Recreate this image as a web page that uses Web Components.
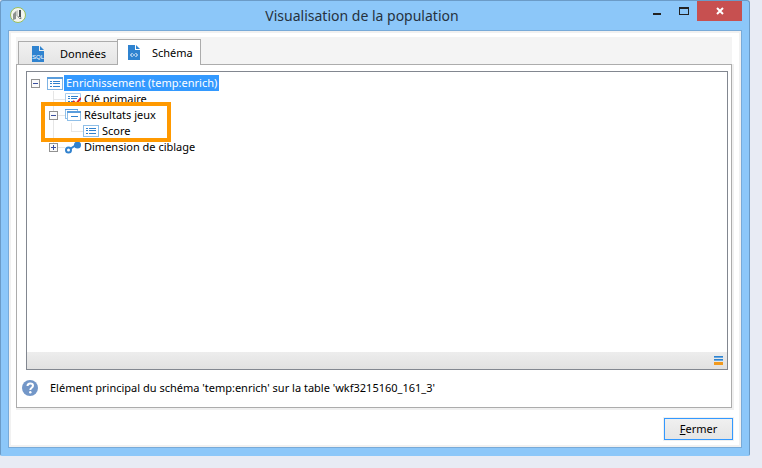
<!DOCTYPE html>
<html lang="fr">
<head>
<meta charset="utf-8">
<title>Visualisation de la population</title>
<style>
  body {
    margin: 0;
    background: #e8ebf4;
    color: #000;
    font: 11px/16px "Noto Sans", "Open Sans", sans-serif;
  }
</style>
</head>
<body>
<app-window heading="Visualisation de la population">
  <tab-strip>
    <tab-button icon="sql">Données</tab-button>
    <tab-button icon="schema" active>Schéma</tab-button>
  </tab-strip>
  <tab-panel>
    <schema-tree>
      <tree-node icon="list" label="Enrichissement (temp:enrich)" state="open" selected>
        <tree-node icon="key" label="Clé primaire"></tree-node>
        <tree-node icon="collection" label="Résultats jeux" state="open" highlight>
          <tree-node icon="list" label="Score"></tree-node>
        </tree-node>
        <tree-node icon="link" label="Dimension de ciblage" state="closed"></tree-node>
      </tree-node>
    </schema-tree>
    <help-line slot="footer">Elément principal du schéma 'temp:enrich' sur la table 'wkf3215160_161_3'</help-line>
  </tab-panel>
  <push-button slot="actions"><u>F</u>ermer</push-button>
</app-window>

<script>
const ICONS = {
  list: `<svg width="16" height="16" viewBox="0 0 16 16" shape-rendering="crispEdges">
    <rect x="0.5" y="2.5" width="15" height="12" fill="#fff" stroke="#7fb4e4"/>
    <path d="M0 2h16v2H0z" fill="#5a9ddc"/>
    <path d="M3 6h2v1H3zM3 8h2v1H3zM3 11h2v1H3zM6 6h7v1H6zM6 8h7v1H6zM6 11h7v1H6z" fill="#3182ce"/></svg>`,
  row: `<svg width="16" height="16" viewBox="0 0 16 16" shape-rendering="crispEdges">
    <rect x="0.5" y="2.5" width="15" height="11" fill="#fff" stroke="#8fbfe8"/>
    <path d="M3 5h2v1H3zM3 7h2v1H3zM3 10h2v1H3zM6 5h7v1H6zM6 7h7v1H6zM6 10h7v1H6z" fill="#3182ce"/></svg>`,
  key: `<svg width="16" height="16" viewBox="0 0 16 16">
    <path d="M.5 2.500h15v11H.5z" fill="#fff" stroke="#a9cdee"/>
    <path d="M3 5h2v1H3zM3 7h2v1H3zM3 10h2v1H3zM6 5h7v1H6zM6 7h6v1H6zM6 10h3v1H6z" fill="#3182ce"/>
    <path d="M8 10l3 3 5-6" fill="none" stroke="#d8232f" stroke-width="2"/></svg>`,
  collection: `<svg width="16" height="16" viewBox="0 0 16 16" shape-rendering="crispEdges">
    <path d="M.5 11.500V2.500h12V5M.5 11.500H3" fill="#fff" stroke="#8fbfe8"/>
    <path d="M0 2h13v1H0z" fill="#5a9ddc"/>
    <rect x="2.500" y="4.500" width="13" height="9" fill="#fff" stroke="#8fbfe8"/>
    <path d="M2 4h14v2H2z" fill="#5a9ddc"/><path d="M6 9h7v1H6z" fill="#3182ce"/></svg>`,
  link: `<svg width="16" height="16" viewBox="0 0 16 16">
    <path d="M5 10l6-4" stroke="#3182ce" stroke-width="2"/>
    <circle cx="3.500" cy="11" r="2.500" fill="#fff" stroke="#3182ce" stroke-width="2"/>
    <circle cx="12.500" cy="6" r="3.500" fill="#3182ce"/></svg>`,
  sql: `<svg width="12" height="16" viewBox="0 0 12 16">
    <path d="M0 0h7v5h5v11H0z" fill="#2f83d0"/><path d="M8 0l4 4H8z" fill="#2f83d0"/>
    <text x="6" y="13" text-anchor="middle" font-family="Liberation Sans, sans-serif" font-size="6" fill="#fff">SQL</text></svg>`,
  schema: `<svg width="12" height="15" viewBox="0 0 12 15">
    <path d="M0 0h7v5h5v10H0z" fill="#2f83d0"/><path d="M8 0l4 4H8z" fill="#2f83d0"/>
    <path d="M4.500 8l-2 2 2 2M7.500 8l2 2-2 2M5 10h2" fill="none" stroke="#fff"/></svg>`
};

class AppWindow extends HTMLElement {
  connectedCallback() {
    this.attachShadow({ mode: 'open' });
    this.shadowRoot.innerHTML = `
      <style>
        :host {
          display: flex;
          flex-direction: column;
          box-sizing: border-box;
          min-height: calc(100vh - 12px);
          margin: 0 12px 12px 0;
          padding: 0 7px 7px;
          background: #8cc7f9;
          border: 1px solid #6b9bc7;
          border-bottom-color: #8cc7f9;
          border-radius: 3px 3px 2px 2px;
        }
        header {
          display: grid;
          grid-template-columns: 1fr auto 1fr;
          height: 29px;
        }
        .app { margin: 5px 0 0 1px; }
        svg { display: block; }
        h1 {
          margin: 0;
          padding-right: 26px;
          font-size: 14px;
          line-height: 29px;
          font-weight: normal;
          color: #26323e;
        }
        .controls {
          display: flex;
          justify-content: flex-end;
        }
        .controls button {
          width: 27px;
          height: 20px;
          padding: 0;
          border: 0;
          background: none;
          display: flex;
          align-items: center;
          justify-content: center;
        }
        .controls .close { width: 45px; background: #c75050; }
        main {
          flex: 1;
          display: flex;
          flex-direction: column;
          padding: 5px 7px 5px 5px;
          background: #fff;
          border: 1px solid #78aad8;
          box-shadow: inset 0 0 0 2px #f1f1f1;
        }
        .page {
          flex: 1;
          display: flex;
          flex-direction: column;
          margin: 1px 2px 0;
        }
        footer {
          display: flex;
          justify-content: flex-end;
          padding: 10px 1px 2px;
        }
      </style>
      <header>
        <svg class="app" width="18" height="18" viewBox="0 0 18 18">
          <circle cx="9" cy="9" r="7.500" fill="#f3f5ef" stroke="#9bbf5a"/>
          <path d="M4 8l3-3v8l-3 1z" fill="#8d9290"/>
          <path d="M7 5l2-1v6H7z" fill="#c8cbc6"/>
          <path d="M10 4h2v8h-2zM8 10l3 3 2-1" fill="#4b5152"/>
        </svg>
        <h1></h1>
        <div class="controls">
          <button aria-label="Réduire"><svg width="8" height="20"><path d="M0 12h8v2H0z" fill="#222"/></svg></button>
          <button aria-label="Agrandir"><svg width="10" height="20" shape-rendering="crispEdges"><path d="M0 6h10v8H0zM1 8v5h8V8z" fill="#222" fill-rule="evenodd"/></svg></button>
          <button class="close" aria-label="Fermer la fenêtre"><svg width="8" height="8" viewBox="0 0 8 8"><path d="M1 1l6 6M7 1L1 7" stroke="#fff" stroke-width="2"/></svg></button>
        </div>
      </header>
      <main>
        <div class="page"><slot></slot></div>
        <footer><slot name="actions"></slot></footer>
      </main>
    `;
    this.shadowRoot.querySelector('h1').textContent = this.getAttribute('heading');
  }
}

class TabStrip extends HTMLElement {
  connectedCallback() {
    this.attachShadow({ mode: 'open' });
    this.shadowRoot.innerHTML = `
      <style>
        :host {
          display: flex;
          align-items: flex-end;
          height: 27px;
          padding-left: 2px;
          background: #f4f4f4;
        }
      </style>
      <slot></slot>
    `;
    this.setAttribute('role', 'tablist');
  }
}

class TabButton extends HTMLElement {
  connectedCallback() {
    this.attachShadow({ mode: 'open' });
    this.shadowRoot.innerHTML = `
      <style>
        :host { display: block; }
        button {
          display: flex;
          align-items: center;
          gap: 16px;
          box-sizing: border-box;
          height: 23px;
          padding: 2px 11px 0 13px;
          border: 1px solid #acacac;
          border-width: 1px 0 0 1px;
          background: linear-gradient(#f1f1f1, #e5e5e5);
          color: inherit;
          font: inherit;
        }
        :host([active]) { margin-bottom: -1px; position: relative; }
        :host([active]) button {
          gap: 12px;
          height: 26px;
          padding: 0 7px 0 10px;
          border-right-width: 1px;
          background: #fff;
        }
      </style>
      <button role="tab" aria-selected="${this.hasAttribute('active')}">
        ${ICONS[this.getAttribute('icon')]}
        <span><slot></slot></span>
      </button>
    `;
  }
}

class TabPanel extends HTMLElement {
  connectedCallback() {
    this.attachShadow({ mode: 'open' });
    this.shadowRoot.innerHTML = `
      <style>
        :host {
          flex: 1;
          display: flex;
          flex-direction: column;
          padding: 6px 3px 0 9px;
          background: #fff;
          border: 1px solid #acacac;
          box-shadow: 1px 1px 0 1px #f0f0f0;
        }
      </style>
      <slot></slot>
      <slot name="footer"></slot>
    `;
    this.setAttribute('role', 'tabpanel');
  }
}

class SchemaTree extends HTMLElement {
  connectedCallback() {
    this.attachShadow({ mode: 'open' });
    this.shadowRoot.innerHTML = `
      <style>
        :host {
          flex: 1;
          display: flex;
          flex-direction: column;
          background: #fff;
          border: 1px solid #828790;
        }
        .nodes { flex: 1; padding: 3px 4px; }
        .status {
          display: flex;
          justify-content: flex-end;
          align-items: center;
          height: 17px;
          padding-right: 4px;
          background: linear-gradient(#ededed, #e1e1e1);
        }
      </style>
      <div class="nodes" role="tree"><slot></slot></div>
      <div class="status">
        <svg width="9" height="9" shape-rendering="crispEdges">
          <path d="M0 0h9v1H0zM0 3h9v1H0z" fill="#2f83d0"/>
          <path d="M0 1h9v1H0zM0 4h9v1H0z" fill="#6aa9e0"/>
          <path d="M0 6h9v3H0z" fill="#f0991e"/>
        </svg>
      </div>
    `;
  }
}

class TreeNode extends HTMLElement {
  connectedCallback() {
    const state = this.getAttribute('state');
    const nested = this.parentElement.matches('tree-node');
    let icon = this.getAttribute('icon');
    if (icon === 'list' && nested) icon = 'row';

    this.attachShadow({ mode: 'open' });
    this.shadowRoot.innerHTML = `
      <style>
        :host { display: block; position: relative; }
        .row {
          display: flex;
          align-items: center;
          height: 16px;
          white-space: nowrap;
        }
        .toggle {
          display: flex;
          flex: none;
          width: 9px;
          height: 9px;
          margin-right: 7px;
          padding: 0;
          border: 0;
          background: none;
          position: relative;
        }
        .icon { display: flex; flex: none; width: 16px; margin-right: 1px; }
        .label { padding: 0 2px; }
        :host([selected]) > .row .label { background: #3399ff; color: #fff; }
        .children { padding-left: 18px; }
        /* connector lines between siblings */
        .line::before {
          content: "";
          position: absolute;
          left: 4px;
          top: 0;
          width: 11px;
          height: 8px;
          border-left: 1px solid #e6e6e6;
          border-bottom: 1px solid #e6e6e6;
        }
        .line:not(.last)::after {
          content: "";
          position: absolute;
          left: 4px;
          top: 8px;
          bottom: 0;
          border-left: 1px solid #e6e6e6;
        }
        .mark {
          position: absolute;
          z-index: 1;
          top: -5px;
          bottom: -3px;
          left: -8px;
          width: 122px;
          border: 4px solid #ff9900;
          pointer-events: none;
        }
      </style>
      ${nested ? `<div class="line ${this.nextElementSibling ? '' : 'last'}"></div>` : ''}
      <div class="row">
        ${state ? `
          <button class="toggle" aria-label="${state === 'open' ? 'Replier' : 'Déplier'}">
            <svg width="9" height="9" shape-rendering="crispEdges">
              <rect x="0.5" y="0.5" width="8" height="8" fill="#fafafa" stroke="#919191"/>
              <path d="M2 4h5v1H2z${state === 'closed' ? 'M4 2h1v5H4z' : ''}" fill="#3a4f9e"/>
            </svg>
          </button>` : '<span class="toggle"></span>'}
        <span class="icon">${ICONS[icon]}</span>
        <span class="label">${this.getAttribute('label')}</span>
      </div>
      <div class="children" role="group"><slot></slot></div>
      ${this.hasAttribute('highlight') ? '<div class="mark"></div>' : ''}
    `;
    this.setAttribute('role', 'treeitem');
  }
}

class HelpLine extends HTMLElement {
  connectedCallback() {
    this.attachShadow({ mode: 'open' });
    this.shadowRoot.innerHTML = `
      <style>
        :host {
          display: flex;
          align-items: center;
          gap: 12px;
          height: 36px;
          padding-bottom: 1px;
          margin-left: -4px;
        }
        svg { flex: none; }
      </style>
      <svg width="16" height="16" viewBox="0 0 16 16">
        <circle cx="8" cy="8" r="8" fill="#7397c8"/>
        <path d="M5.500 6c0-3.500 5.500-3.200 5.500-.3C11 7.800 8.300 7.600 8.300 10" fill="none" stroke="#fff" stroke-width="2"/>
        <circle cx="8.300" cy="12.300" r="1.200" fill="#fff"/>
      </svg>
      <span><slot></slot></span>
    `;
  }
}

class PushButton extends HTMLElement {
  connectedCallback() {
    this.attachShadow({ mode: 'open' });
    this.shadowRoot.innerHTML = `
      <style>
        :host { display: block; }
        button {
          min-width: 69px;
          height: 22px;
          padding: 0 12px;
          border: 1px solid #3399ff;
          background: linear-gradient(#f0f0f0, #e5e5e5);
          box-shadow: 0 0 0 1px #f0f0f0;
          color: inherit;
          font: inherit;
        }
      </style>
      <button><slot></slot></button>
    `;
  }
}

customElements.define('app-window', AppWindow);
customElements.define('tab-strip', TabStrip);
customElements.define('tab-button', TabButton);
customElements.define('tab-panel', TabPanel);
customElements.define('schema-tree', SchemaTree);
customElements.define('tree-node', TreeNode);
customElements.define('help-line', HelpLine);
customElements.define('push-button', PushButton);
</script>
</body>
</html>
